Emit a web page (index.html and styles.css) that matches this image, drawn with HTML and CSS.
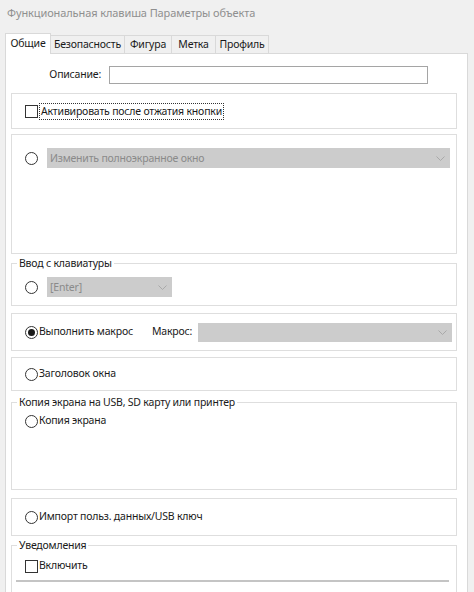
FILE: index.html
```html
<!DOCTYPE html>
<html lang="ru">
<head>
<meta charset="utf-8">
<title>Функциональная клавиша Параметры объекта</title>
<link rel="stylesheet" href="styles.css">
</head>
<body>
<div class="window">
  <div class="titlebar">Функциональная клавиша Параметры объекта</div>
  <div class="tabs">
    <div class="tab tab-active w-general">Общие</div>
    <div class="tab w-security">Безопасность</div>
    <div class="tab w-figure">Фигура</div>
    <div class="tab w-label">Метка</div>
    <div class="tab w-profile">Профиль</div>
  </div>
  <div class="panel">
    <div class="desc-row">
      <span class="desc-label">Описание:</span>
      <span class="textbox"></span>
    </div>

    <div class="group g1">
      <span class="check"></span>
      <span class="focus-label">Активировать после отжатия кнопки</span>
    </div>

    <div class="group g2">
      <div class="row">
        <span class="radio"></span>
        <div class="combo combo-wide">
          <span class="combo-text">Изменить полноэкранное окно</span>
          <svg class="chev" width="9" height="5" viewBox="0 0 9 5"><polyline points="0.5,0.5 4.5,4.5 8.5,0.5" fill="none" stroke="#a9a9a9" stroke-width="1"/></svg>
        </div>
      </div>
    </div>

    <fieldset class="fgroup g3">
      <legend>Ввод с клавиатуры</legend>
      <div class="row">
        <span class="radio"></span>
        <div class="combo combo-key">
          <span class="combo-text">[Enter]</span>
          <svg class="chev" width="9" height="5" viewBox="0 0 9 5"><polyline points="0.5,0.5 4.5,4.5 8.5,0.5" fill="none" stroke="#a9a9a9" stroke-width="1"/></svg>
        </div>
      </div>
    </fieldset>

    <div class="group g4">
      <div class="row">
        <span class="opt opt-macro"><span class="radio radio-on"></span><span class="txt">Выполнить макрос</span></span>
        <span class="macro-label">Макрос:</span>
        <div class="combo combo-macro">
          <span class="combo-text"></span>
          <svg class="chev" width="9" height="5" viewBox="0 0 9 5"><polyline points="0.5,0.5 4.5,4.5 8.5,0.5" fill="none" stroke="#a9a9a9" stroke-width="1"/></svg>
        </div>
      </div>
    </div>

    <div class="group g5">
      <span class="opt"><span class="radio"></span><span class="txt">Заголовок окна</span></span>
    </div>

    <fieldset class="fgroup g6">
      <legend>Копия экрана на USB, SD карту или принтер</legend>
      <span class="opt"><span class="radio"></span><span class="txt">Копия экрана</span></span>
    </fieldset>

    <div class="group g7">
      <span class="opt"><span class="radio"></span><span class="txt">Импорт польз. данных/USB ключ</span></span>
    </div>

    <fieldset class="fgroup g8">
      <legend>Уведомления</legend>
      <span class="opt"><span class="check"></span><span class="txt">Включить</span></span>
      <div class="track"></div>
    </fieldset>
  </div>
</div>
</body>
</html>
```

FILE: styles.css
```css
* { box-sizing: border-box; }
html, body {
  margin: 0;
  padding: 0;
  background: #f0f0f0;
  overflow: hidden;
}
body {
  font-family: "Noto Sans", "Segoe UI", sans-serif;
  font-size: 10.5px;
  letter-spacing: -0.2px;
  line-height: 14px;
  color: #1a1a1a;
}
.window {
  width: 474px;
  height: 592px;
  overflow: hidden;
}
.titlebar {
  height: 33px;
  padding: 6px 0 0 7px;
  color: #8f8f8f;
  font-size: 11px;
  letter-spacing: -0.1px;
}
.tabs {
  display: flex;
  align-items: flex-end;
  height: 20px;
  margin-left: 5px;
  position: relative;
  z-index: 1;
}
.tab {
  height: 18px;
  border: 1px solid #d9d9d9;
  border-bottom: none;
  border-left: none;
  background: #f0f0f0;
  text-align: center;
  line-height: 16px;
  color: #1a1a1a;
}
.tab-active {
  height: 21px;
  border-left: 1px solid #d9d9d9;
  background: #fff;
  line-height: 18px;
  margin-bottom: -1px;
}
.w-general { width: 46px; }
.w-security { width: 74px; }
.w-figure { width: 47px; }
.w-label { width: 44px; }
.w-profile { width: 53px; }

.panel {
  margin: 0 6px 0 5px;
  height: 600px;
  background: #fff;
  border: 1px solid #d9d9d9;
  padding: 0 10px 0 5px;
}
.desc-row {
  display: flex;
  align-items: center;
  margin-top: 12px;
  height: 18px;
}
.desc-label {
  width: 98px;
  text-align: right;
  padding-right: 8px;
  padding-bottom: 2px;
}
.textbox {
  width: 319px;
  height: 18px;
  border: 1px solid #a5a5a5;
  background: #fff;
}
.group {
  border: 1px solid #dedede;
  padding: 0 0 0 13px;
  display: flex;
  align-items: center;
}
.fgroup {
  border: 1px solid #dedede;
  margin: 0;
  min-width: 0;
  padding: 0 0 0 13px;
}
.fgroup legend {
  padding: 0 2px;
  margin-left: -8px;
  line-height: 14px;
}
.g1 { margin-top: 9px; height: 36px; }
.g2 { margin-top: 5px; height: 120px; align-items: flex-start; padding-top: 13px; padding-right: 6px; }
.g3 { margin-top: 2px; padding-top: 7px; padding-bottom: 8px; }
.g4 { margin-top: 7px; height: 38px; padding-right: 4px; }
.g5 { margin-top: 6px; height: 34px; }
.g6 { margin-top: 4px; padding-top: 5px; padding-bottom: 61px; }
.g7 { margin-top: 8px; height: 38px; }
.g8 { margin-top: 2px; padding-top: 7px; padding-bottom: 30px; padding-left: 13px; }

.row {
  display: flex;
  align-items: center;
  width: 100%;
}
.opt {
  display: flex;
  align-items: center;
  gap: 1px;
  height: 14px;
}
.txt { padding-bottom: 2px; }
.opt-macro { width: 127px; }
.radio {
  width: 13px;
  height: 13px;
  border: 1px solid #333;
  border-radius: 50%;
  background: #fff;
  flex: none;
  display: flex;
  align-items: center;
  justify-content: center;
}
.radio-on::after {
  content: "";
  width: 7px;
  height: 7px;
  border-radius: 50%;
  background: #1a1a1a;
}
.check {
  width: 13px;
  height: 13px;
  border: 1px solid #333;
  background: #fff;
  flex: none;
}
.focus-label {
  margin-left: 1px;
  border: 1px dotted #333;
  padding: 0 1px 1px;
  line-height: 14px;
}
.combo {
  height: 20px;
  background: #cccccc;
  display: flex;
  align-items: center;
  justify-content: space-between;
  padding: 0 5px 0 3px;
}
.combo-text { color: #8a8a8a; padding-bottom: 1px; }
.combo-wide { margin-left: 9px; flex: 1; }
.combo-key { margin-left: 9px; width: 125px; }
.combo-macro { margin-left: 6px; flex: 1; height: 19px; }
.macro-label { white-space: nowrap; padding-bottom: 2px; }
.chev { flex: none; }
.track {
  margin: 7px 7px 0 -9px;
  height: 2px;
  background: #c4c4c4;
}
```
